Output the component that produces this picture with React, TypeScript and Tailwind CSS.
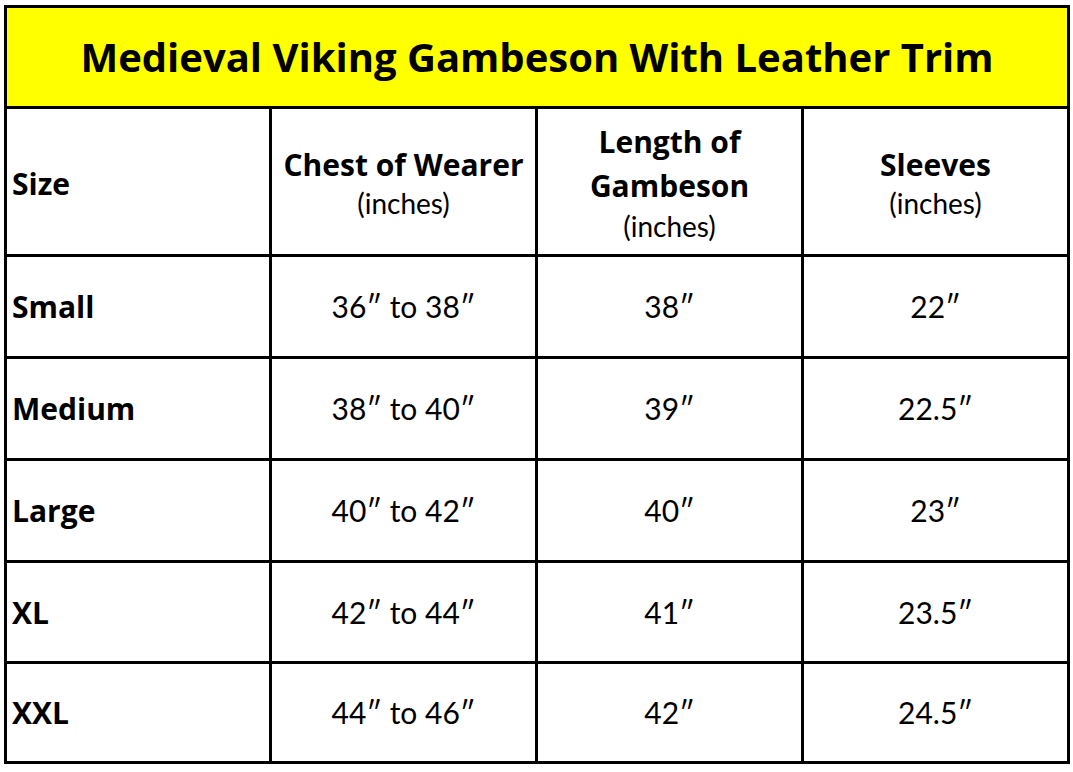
import React from 'react';

const rows = [
  { size: 'Small', chest: '36″ to 38″', length: '38″', sleeves: '22″' },
  { size: 'Medium', chest: '38″ to 40″', length: '39″', sleeves: '22.5″' },
  { size: 'Large', chest: '40″ to 42″', length: '40″', sleeves: '23″' },
  { size: 'XL', chest: '42″ to 44″', length: '41″', sleeves: '23.5″' },
  { size: 'XXL', chest: '44″ to 46″', length: '42″', sleeves: '24.5″' },
];

// bold headings look closest in Open Sans, plain numbers in Lato
const bold = 'font-["Open_Sans",sans-serif] font-bold';

export default function App() {
  return (
    <div className="w-[1073px] h-[772px] bg-white pt-[5px] pl-[4px] text-black font-['Lato',sans-serif]">
      <div className="grid w-[1066px] grid-cols-[262px_263px_263px_263px] grid-rows-[98px_145px_99px_99px_99px_98px_97px] gap-[3px] bg-black p-[3px]">
        <div className={`col-span-4 flex items-center justify-center bg-[#ffff00] text-[40px] ${bold}`}>
          Medieval Viking Gambeson With Leather Trim
        </div>

        <div className={`flex items-center bg-white pl-[5px] pt-[4px] text-[30px] ${bold}`}>Size</div>
        <div className="flex flex-col items-center justify-center bg-white pt-[2px]">
          <span className={`text-[30px] leading-[40px] ${bold}`}>Chest of Wearer</span>
          <span className="text-[28px] leading-[36px]">(inches)</span>
        </div>
        <div className="flex flex-col items-center justify-center bg-white">
          <span className={`text-[30px] leading-[44px] ${bold}`}>Length of</span>
          <span className={`text-[30px] leading-[44px] ${bold}`}>Gambeson</span>
          <span className="text-[28px] leading-[36px]">(inches)</span>
        </div>
        <div className="flex flex-col items-center justify-center bg-white pt-[2px]">
          <span className={`text-[30px] leading-[40px] ${bold}`}>Sleeves</span>
          <span className="text-[28px] leading-[36px]">(inches)</span>
        </div>

        {rows.map((r) => (
          <React.Fragment key={r.size}>
            <div className={`flex items-center bg-white pl-[5px] text-[30px] ${bold}`}>{r.size}</div>
            <div className="flex items-center justify-center bg-white text-[30px]">{r.chest}</div>
            <div className="flex items-center justify-center bg-white text-[30px]">{r.length}</div>
            <div className="flex items-center justify-center bg-white text-[30px]">{r.sleeves}</div>
          </React.Fragment>
        ))}
      </div>
    </div>
  );
}
